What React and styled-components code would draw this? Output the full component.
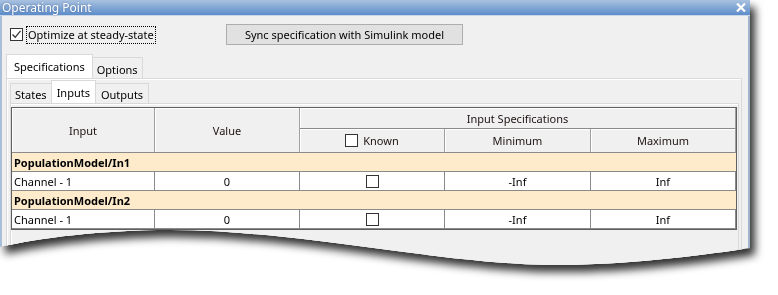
import React from "react";
import styled, { createGlobalStyle } from "styled-components";

const GlobalStyle = createGlobalStyle`
  html, body {
    margin: 0;
    padding: 0;
    background: #ffffff;
  }
  body {
    font-family: "Noto Sans", "Open Sans", sans-serif;
    font-size: 11px;
    color: #000;
  }
`;

const Stage = styled.div`
  width: 778px;
  height: 295px;
  overflow: hidden;
`;

const Shadow = styled.div`
  width: 750px;
  filter: drop-shadow(5px 7px 4px rgba(0, 0, 0, 0.8));
`;

const Window = styled.div`
  width: 750px;
  height: 272px;
  display: flex;
  flex-direction: column;
  background: #f0f0f0;
  clip-path: path("M0,0 H750 V248 C700,256 620,265 560,265 C440,265 300,230 170,230 C100,230 40,238 0,247 Z");
`;

const TitleBar = styled.div`
  height: 15px;
  flex: none;
  display: flex;
  align-items: center;
  justify-content: space-between;
  padding: 0 4px 0 2px;
  background: linear-gradient(#a9c1df, #5d8dca);
  border-bottom: 1px solid #cbd8e8;
  color: #fff;
  font-size: 12px;
  line-height: 15px;
  text-shadow: 0 0 2px rgba(40, 70, 120, 0.6);
`;

const Body = styled.div`
  flex: 1;
  border-left: 2px solid #a9bfd9;
  border-right: 2px solid #9fb3cb;
  padding: 8px 0 0 4px;
`;

const TopRow = styled.div`
  display: flex;
  align-items: center;
  height: 21px;
  padding-left: 4px;
`;

const CheckArea = styled.div`
  width: 216px;
  display: flex;
  align-items: center;
`;

const Box = styled.span`
  width: 13px;
  height: 13px;
  box-sizing: border-box;
  border: 1px solid #333;
  background: #fff;
  display: inline-flex;
  align-items: center;
  justify-content: center;
  flex: none;
`;

const FocusLabel = styled.span`
  margin-left: 3px;
  padding: 0 1px;
  border: 1px dotted #000;
  line-height: 16px;
`;

const SyncButton = styled.div`
  width: 237px;
  height: 21px;
  box-sizing: border-box;
  border: 1px solid #adadad;
  background: #e1e1e1;
  display: flex;
  align-items: center;
  justify-content: center;
`;

const TabStrip = styled.div`
  display: flex;
  align-items: flex-end;
  height: ${(p) => p.$h}px;
  margin-top: ${(p) => p.$mt || 0}px;
`;

const Tab = styled.div`
  box-sizing: border-box;
  height: ${(p) => (p.$active ? p.$h : p.$h - 3)}px;
  padding: 0 ${(p) => p.$px}px;
  display: flex;
  align-items: center;
  border: 1px solid #d9d9d9;
  border-bottom: none;
  margin-right: -1px;
  background: ${(p) => (p.$active ? "#ffffff" : "#f0f0f0")};
  position: relative;
  z-index: ${(p) => (p.$active ? 2 : 1)};
  padding-top: ${(p) => (p.$active ? 0 : 2)}px;
`;

const Panel = styled.div`
  box-sizing: border-box;
  width: ${(p) => p.$w}px;
  border: 1px solid #d9d9d9;
  box-shadow: inset 0 1px 0 #ffffff, inset 1px 0 0 #ffffff;
  background: #f0f0f0;
  padding: ${(p) => p.$pad};
  height: ${(p) => p.$h}px;
`;

const Grid = styled.div`
  width: 726px;
  box-sizing: border-box;
  display: grid;
  grid-template-columns: 143px 145px 145px 146px 145px;
  grid-template-rows: 21px 24px 19px 19px 19px 19px;
  border: 1px solid #5f5f5f;
  box-shadow: inset 1px 1px 0 #9a9a9a;
  background: #fff;
`;

const HeadCell = styled.div`
  grid-column: ${(p) => p.$col};
  grid-row: ${(p) => p.$row};
  background: #f0f0f0;
  border-right: 1px solid #a0a0a0;
  border-bottom: 1px solid #8a8a8a;
  box-shadow: inset 1px 1px 0 #ffffff;
  display: flex;
  align-items: center;
  justify-content: center;
  color: #1e1212;
`;

const GroupRow = styled.div`
  grid-column: 1 / -1;
  background: #fdebcb;
  border-bottom: 1px solid #8a8a8a;
  font-weight: 700;
  padding-left: 2px;
  display: flex;
  align-items: center;
`;

const Cell = styled.div`
  border-right: 1px solid #8a8a8a;
  border-bottom: 1px solid #8a8a8a;
  display: flex;
  align-items: center;
  justify-content: ${(p) => (p.$left ? "flex-start" : "center")};
  padding-left: ${(p) => (p.$left ? 2 : 0)}px;
  background: #fff;
`;

const Gap = styled.span`
  width: 5px;
  display: inline-block;
`;

function CheckBox({ checked }) {
  return (
    <Box>
      {checked && (
        <svg width="11" height="11" viewBox="0 0 11 11">
          <path d="M1.5 5.5 L4.2 8.3 L9.5 1.8" fill="none" stroke="#333" strokeWidth="1.3" />
        </svg>
      )}
    </Box>
  );
}

const groups = ["PopulationModel/In1", "PopulationModel/In2"];

export default function App() {
  return (
    <Stage>
      <GlobalStyle />
      <Shadow>
        <Window>
          <TitleBar>
            <span>Operating Point</span>
            <svg width="10" height="9" viewBox="0 0 10 9">
              <path d="M1 0.5 L9 8.5 M9 0.5 L1 8.5" stroke="#fff" strokeWidth="2.2" />
            </svg>
          </TitleBar>
          <Body>
            <TopRow>
              <CheckArea>
                <CheckBox checked />
                <FocusLabel>Optimize at steady-state</FocusLabel>
              </CheckArea>
              <SyncButton>Sync specification with Simulink model</SyncButton>
            </TopRow>
            <TabStrip $h={24} $mt={9}>
              <Tab $active $h={24} $px={7}>Specifications</Tab>
              <Tab $h={24} $px={4}>Options</Tab>
            </TabStrip>
            <Panel $w={736} $h={200} $pad="1px 0 0 3px">
              <TabStrip $h={23}>
                <Tab $h={23} $px={4}>States</Tab>
                <Tab $active $h={23} $px={5}>Inputs</Tab>
                <Tab $h={23} $px={5}>Outputs</Tab>
              </TabStrip>
              <Panel $w={729} $h={180} $pad="3px 0 0 0">
                <Grid>
                  <HeadCell $col="1" $row="1 / 3">Input</HeadCell>
                  <HeadCell $col="2" $row="1 / 3">Value</HeadCell>
                  <HeadCell $col="3 / 6" $row="1">Input Specifications</HeadCell>
                  <HeadCell $col="3" $row="2">
                    <CheckBox />
                    <Gap />
                    Known
                  </HeadCell>
                  <HeadCell $col="4" $row="2">Minimum</HeadCell>
                  <HeadCell $col="5" $row="2">Maximum</HeadCell>
                  {groups.map((g) => (
                    <React.Fragment key={g}>
                      <GroupRow>{g}</GroupRow>
                      <Cell $left>Channel - 1</Cell>
                      <Cell>0</Cell>
                      <Cell>
                        <CheckBox />
                      </Cell>
                      <Cell>-Inf</Cell>
                      <Cell>Inf</Cell>
                    </React.Fragment>
                  ))}
                </Grid>
              </Panel>
            </Panel>
          </Body>
        </Window>
      </Shadow>
    </Stage>
  );
}
